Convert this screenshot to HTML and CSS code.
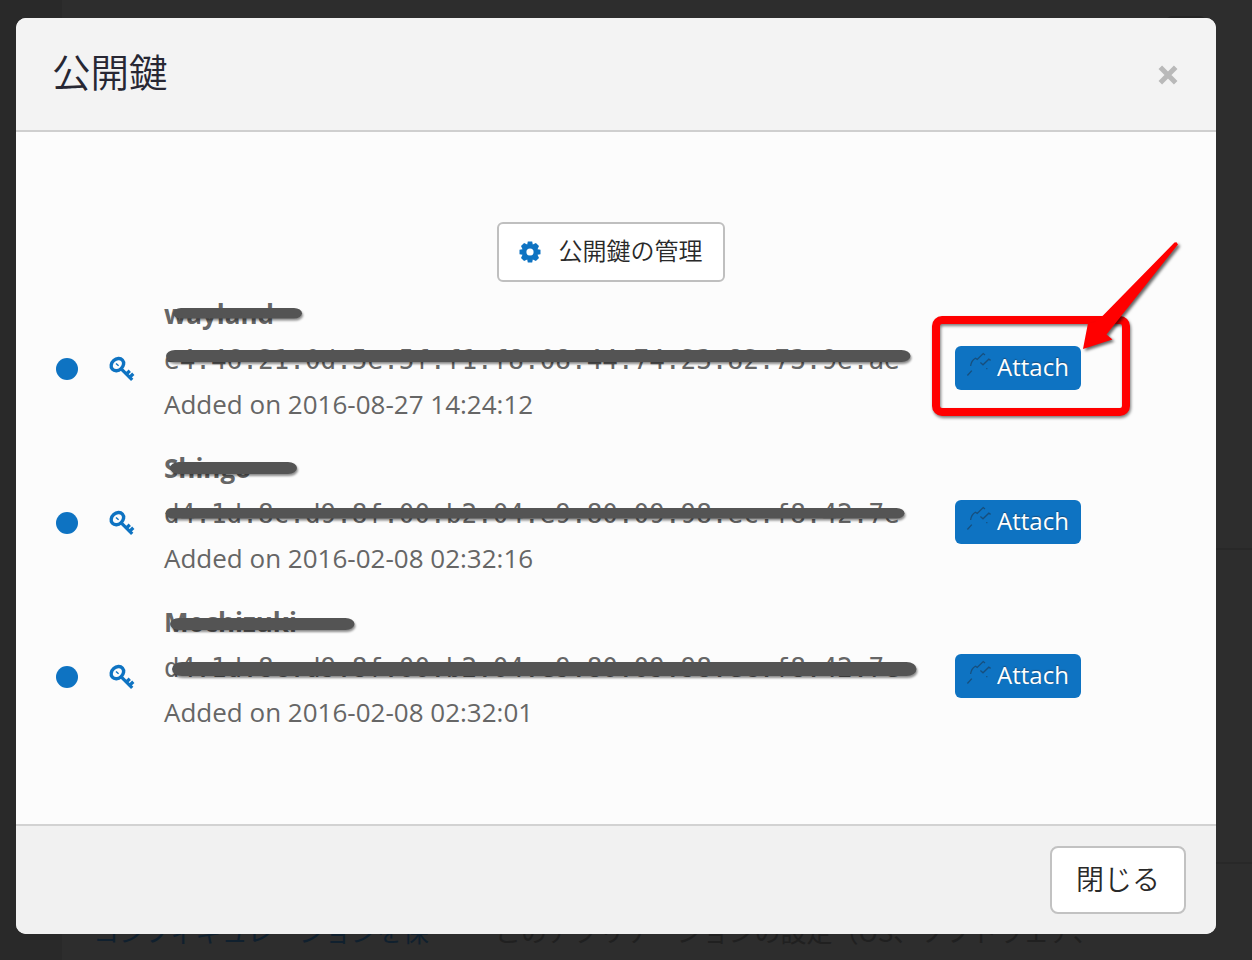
FILE: index.html
```html
<!DOCTYPE html>
<html lang="ja">
<head>
<meta charset="utf-8">
<title>公開鍵</title>
<link rel="stylesheet" href="styles.css">
</head>
<body>
<svg class="symbols" aria-hidden="true">
  <symbol id="key" viewBox="0 0 26 26">
    <ellipse cx="8.4" cy="8.6" rx="6.8" ry="5.5" transform="rotate(-42 8.4 8.6)" fill="none" stroke="#0e73c2" stroke-width="3.4"/>
    <path d="M7 7.400 9.600 9.800" stroke="#0e73c2" stroke-width="1.4" fill="none"/>
    <path d="M11.700 12.400 23.200 23.800M17.400 18 20.800 14.800M20.800 21.100 24.300 17.800" fill="none" stroke="#0e73c2" stroke-width="3.3"/>
  </symbol>
  <symbol id="attach" viewBox="0 0 26 26">
    <path d="M1.4 23.5 5.8 18.6M4.6 14C5 10.5 6.8 7.8 9.4 6.3L11.2 7.4 17.2 1.6 19 3M14.4 10.5 17 12.8 22.8 7.2 24.6 8.4M20.2 16.6h1.2" fill="none" stroke="#174f7d" stroke-width="1.3"/>
  </symbol>
</svg>
<div class="page">
  <div class="rail"></div>
  <main class="content">
    <div class="panel panel-top"><div class="tab"></div></div>
    <div class="panel panel-middle"></div>
    <div class="settings">
      <span class="settings-link">コンフィギュレーションを保</span>
      <span class="settings-text">このアプリケーションの設定（OS、ソフトウェア、</span>
    </div>
  </main>
</div>
<section class="modal">
  <header class="modal-header">
    <h1>公開鍵</h1>
    <svg class="close" viewBox="0 0 20 20"><path d="M2.3 2.3 17.7 17.7M17.7 2.3 2.3 17.7" stroke="#b9b9b9" stroke-width="5"/></svg>
  </header>
  <div class="modal-body">
    <button class="manage">
      <svg class="gear" viewBox="-11 -11 22 22">
        <path d="M-2.2-10.5h4.4l.6 3L5.9-9 9-5.9 7.5-2.8l3 .6v4.4l-3 .6L9 5.9 5.9 9 2.8 7.5l-.6 3h-4.4l-.6-3L-5.9 9-9 5.9-7.5 2.8l-3-.6v-4.4l3-.6L-9-5.9-5.9-9-2.8-7.5z" fill="#0e73c2"/>
        <circle r="3.6" fill="#fff"/>
      </svg>
      <span>公開鍵の管理</span>
    </button>
    <ul class="keys">
      <li class="key">
        <span class="dot"></span>
        <svg class="key-icon"><use href="#key"/></svg>
        <div class="details"><strong>wayland</strong><code>e4:46:21:0d:5e:5f:f1:f8:08:44:74:23:82:73:9e:ae</code><span>Added on 2016-08-27 14:24:12</span></div>
        <button class="attach"><svg class="attach-icon"><use href="#attach"/></svg>Attach</button>
      </li>
      <li class="key">
        <span class="dot"></span>
        <svg class="key-icon"><use href="#key"/></svg>
        <div class="details"><strong>Shingo</strong><code>d4:1d:8c:d9:8f:00:b2:04:e9:80:09:98:ec:f8:42:7e</code><span>Added on 2016-02-08 02:32:16</span></div>
        <button class="attach"><svg class="attach-icon"><use href="#attach"/></svg>Attach</button>
      </li>
      <li class="key">
        <span class="dot"></span>
        <svg class="key-icon"><use href="#key"/></svg>
        <div class="details"><strong>Mochizuki</strong><code>d4:1d:8c:d9:8f:00:b2:04:e9:80:09:98:ec:f8:42:7e</code><span>Added on 2016-02-08 02:32:01</span></div>
        <button class="attach"><svg class="attach-icon"><use href="#attach"/></svg>Attach</button>
      </li>
    </ul>
  </div>
  <footer class="modal-footer"><button class="dismiss">閉じる</button></footer>
</section>
<svg class="annotations" viewBox="0 0 1252 960">
  <g class="redactions">
    <rect x="173" y="308" width="129" height="10.5" rx="8" ry="5.2"/>
    <rect x="166" y="350" width="744.5" height="12" rx="9" ry="6"/>
    <rect x="170" y="462" width="127" height="12" rx="9" ry="6"/>
    <rect x="165.5" y="508" width="739" height="10.5" rx="8" ry="5.2"/>
    <rect x="170" y="618" width="184.5" height="12" rx="9" ry="6"/>
    <rect x="172" y="662" width="744.5" height="14" rx="10" ry="7"/>
  </g>
  <rect class="frame" x="936" y="320" width="190" height="92" rx="6"/>
  <path class="arrow" d="M1083 349 1088 323 1095 322 1103 315.5 1174.5 242.5 1176.5 242.3 1178 244.5 1106.5 334.5 1112.5 339.5z"/>
</svg>
</body>
</html>
```
FILE: styles.css
```css
* { box-sizing: border-box; }
body { margin: 0; height: 960px; overflow: hidden; background: #2d2d2d; font-family: "Open Sans", "Noto Sans CJK JP", sans-serif; color: #666; }
button { font: inherit; margin: 0; padding: 0; display: flex; align-items: center; justify-content: center; }
.symbols { display: none; }
.page { display: flex; height: 960px; }
.rail { width: 62px; background: #292929; }
.content { flex: 1; display: flex; flex-direction: column; }
.panel { border-bottom: 2px solid #282828; }
.panel-top { height: 550px; padding: 16px 46px 0 0; display: flex; justify-content: flex-end; }
.tab { width: 40px; height: 30px; border-radius: 6px; background: #242424; }
.panel-middle { height: 314px; }
.settings { display: flex; padding: 47px 0 0 31px; font: 26px/39px "Noto Sans CJK JP", sans-serif; white-space: nowrap; }
.settings-link { width: 402px; color: #10202e; }
.settings-text { color: #202020; }

.modal { position: absolute; left: 16px; top: 18px; width: 1200px; height: 916px; display: flex; flex-direction: column; background: #fcfcfc; border-radius: 10px; overflow: hidden; }
.modal-header { height: 114px; display: flex; justify-content: space-between; align-items: center; padding: 0 38px 0 36px; background: #f3f3f3; border-bottom: 2px solid #cfcfcf; }
.modal-header h1 { margin: 0; padding-bottom: 9px; font: 350 38.5px/56px "Noto Sans CJK JP", sans-serif; color: #272733; }
.close { width: 20px; height: 20px; margin-top: 2px; }
.modal-body { flex: 1; padding-top: 90px; }
.manage { width: 228px; height: 60px; margin-left: 481px; padding-right: 1px; background: #fff; border: 2px solid #bfbfbf; border-radius: 6px; font: 350 24px/36px "Noto Sans CJK JP", sans-serif; color: #292929; gap: 18px; }
.manage span { padding-bottom: 4px; }
.gear { width: 22px; height: 22px; margin-bottom: 1px; }
.keys { list-style: none; margin: 10px 0 0; padding: 0 0 0 40px; }
.key { height: 154px; display: flex; align-items: center; }
.dot { width: 22px; height: 22px; border-radius: 50%; background: #0e73c2; }
.key-icon { width: 26px; height: 26px; margin-left: 31px; }
.details { display: flex; flex-direction: column; width: 791px; margin-left: 29px; padding-bottom: 20px; font-size: 26px; line-height: 45px; }
.details code { padding-top: 1px; font: 26px/44px "DejaVu Sans Mono", monospace; }
.attach { width: 126px; height: 44px; margin-bottom: 2px; padding: 0 1px 3px 0; border: 0; border-radius: 6px; background: #0e73c2; color: #fff; font-size: 24px; text-shadow: 0 -1px 1px #174f7d; }
.attach-icon { width: 26px; height: 26px; margin: -3px 5px 0 0; }
.modal-footer { height: 110px; padding: 20px 30px; display: flex; justify-content: flex-end; background: #f1f1f1; border-top: 2px solid #d2d2d2; }
.dismiss { width: 136px; height: 68px; padding-bottom: 4px; background: #fff; border: 2px solid #c2c2c2; border-radius: 8px; font: 350 28px/42px "Noto Sans CJK JP", sans-serif; color: #292929; }

.annotations { position: absolute; left: 0; top: 0; width: 1252px; height: 960px; pointer-events: none; }
.redactions { fill: #545454; filter: drop-shadow(1px 2px 1px rgba(0, 0, 0, .45)); }
.frame { fill: none; stroke: #f00; stroke-width: 8px; filter: drop-shadow(1px 2px 1.5px rgba(0, 0, 0, .5)); }
.arrow { fill: #f00; filter: drop-shadow(2px 2px 1.5px rgba(0, 0, 0, .6)); }
```
